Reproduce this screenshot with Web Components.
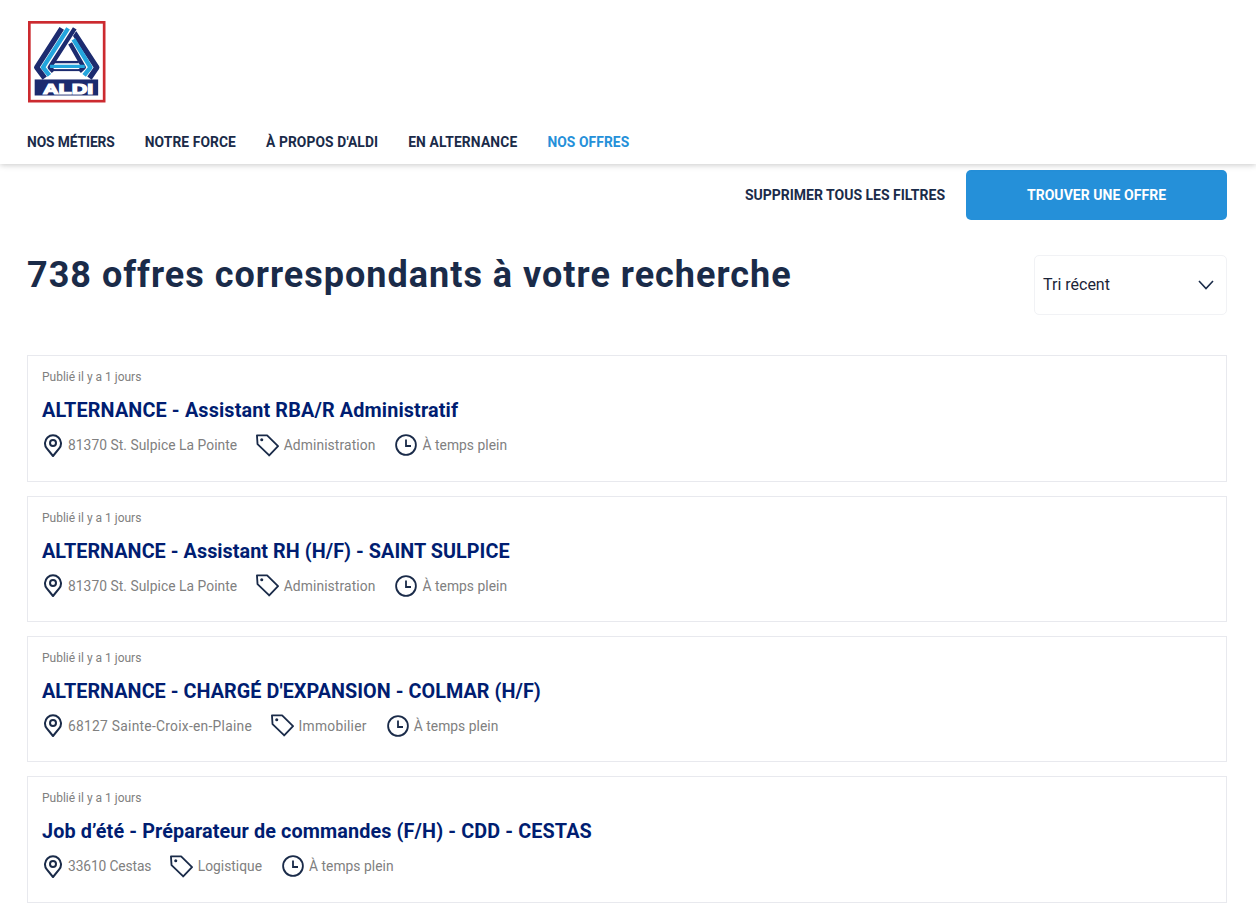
<!DOCTYPE html>
<html lang="fr"><head><meta charset="utf-8"><title>Offres ALDI</title>
<style>
html,body{margin:0;background:#fff;font-family:Roboto,"Liberation Sans",sans-serif;color:#1a2b49}
body{height:910px;overflow:hidden}
</style></head><body>
<aldi-header>
  <aldi-nav-link style="--ls:-.1px">NOS MÉTIERS</aldi-nav-link>
  <aldi-nav-link style="--ls:.1px">NOTRE FORCE</aldi-nav-link>
  <aldi-nav-link style="--ls:.12px">À PROPOS D'ALDI</aldi-nav-link>
  <aldi-nav-link style="--ls:.18px">EN ALTERNANCE</aldi-nav-link>
  <aldi-nav-link style="--ls:.1px" active>NOS OFFRES</aldi-nav-link>
</aldi-header>
<aldi-filter-bar></aldi-filter-bar>
<aldi-results-head count="738 offres correspondants à votre recherche"></aldi-results-head>
<aldi-job-list>
  <aldi-job-card style="--t:.15px;--p:.05px;--c:.12px" date="Publié il y a 1 jours" title="ALTERNANCE - Assistant RBA/R Administratif" place="81370 St. Sulpice La Pointe" cat="Administration" hours="À temps plein"></aldi-job-card>
  <aldi-job-card style="--t:.05px;--p:.05px;--c:.12px" date="Publié il y a 1 jours" title="ALTERNANCE - Assistant RH (H/F) - SAINT SULPICE" place="81370 St. Sulpice La Pointe" cat="Administration" hours="À temps plein"></aldi-job-card>
  <aldi-job-card style="--t:.05px;--p:.27px;--c:.25px" date="Publié il y a 1 jours" title="ALTERNANCE - CHARGÉ D'EXPANSION - COLMAR (H/F)" place="68127 Sainte-Croix-en-Plaine" cat="Immobilier" hours="À temps plein"></aldi-job-card>
  <aldi-job-card style="--t:.12px;--p:-.12px;--c:0px" date="Publié il y a 1 jours" title="Job d’été - Préparateur de commandes (F/H) - CDD - CESTAS" place="33610 Cestas" cat="Logistique" hours="À temps plein"></aldi-job-card>
</aldi-job-list>
<script>
const def=(n,html)=>customElements.define(n,class extends HTMLElement{
  connectedCallback(){ if(this.shadowRoot)return; const s=this.attachShadow({mode:'open'});
    s.innerHTML=typeof html==='function'?html(this):html; }
});
const LOGO=`<svg width="77.5" height="81.5" viewBox="40 33 232 244" aria-label="ALDI" style="display:block">
<rect x="44" y="37" width="224" height="236" fill="#fff" stroke="#cc2a2f" stroke-width="8"/>
<g fill="none" stroke-linejoin="round">
<path d="M178 68L246 172L224 204" stroke="#1c2b6f" stroke-width="16"/>
<path d="M176 88L227 172L208 196" stroke="#23a5dd" stroke-width="13"/>
<path d="M166 100L207 172L194 184" stroke="#1c2b6f" stroke-width="13"/>
<path d="M180 55L105 172L116 184" stroke="#fff" stroke-width="16"/>
<path d="M180 55L105 172L116 184" stroke="#1c2b6f" stroke-width="13"/>
<path d="M160 55L85 172L104 196" stroke="#23a5dd" stroke-width="13"/>
<path d="M141 55L66 172L90 204" stroke="#1c2b6f" stroke-width="16"/>
<path d="M118 156H192" stroke="#1c2b6f" stroke-width="7"/>
<path d="M106 169H210" stroke="#23a5dd" stroke-width="10"/>
<path d="M112 180H202" stroke="#1c2b6f" stroke-width="6"/>
</g>
<rect x="60" y="208" width="190" height="48" fill="#1c2b6f"/>
<text x="160" y="251" text-anchor="middle" font-family="Liberation Sans" font-weight="700" font-size="42" fill="#fff" stroke="#fff" stroke-width="3.5" textLength="150" lengthAdjust="spacingAndGlyphs">ALDI</text>
</svg>`;
def('aldi-logo',`<style>:host{display:block;width:78px;height:83px;margin-left:1px;line-height:0}</style>${LOGO}`);
def('aldi-header',`<style>
:host{display:block;height:164px;box-sizing:border-box;padding:21px 27px 0;background:#fff;box-shadow:0 1px 6px rgba(0,0,0,.22);position:relative}
nav{display:flex;gap:30px;margin-top:28px;height:20px;align-items:center}
</style><aldi-logo></aldi-logo><nav><slot></slot></nav>`);
def('aldi-nav-link',`<style>
:host{display:block;font:700 13.8px/20px Roboto,sans-serif;color:#1a2b49;white-space:nowrap;letter-spacing:var(--ls,0)}
:host([active]){color:#2590d9}
</style><slot></slot>`);
def('aldi-filter-bar',`<style>
:host{display:flex;justify-content:flex-end;align-items:center;gap:21px;padding:6px 29px 0 27px;font:700 14px/20px Roboto,sans-serif}
span{color:#1a2b49}
button{width:261px;height:50px;border:0;border-radius:5px;background:#2590d9;color:#fff;font:inherit;letter-spacing:.05px;padding:0}
</style><span>SUPPRIMER TOUS LES FILTRES</span><button>TROUVER UNE OFFRE</button>`);
def('aldi-results-head',h=>`<style>
:host{display:flex;justify-content:space-between;align-items:flex-start;padding:35px 29px 0 27px}
h1{margin:1px 0 0;font:700 36px/38px Roboto,sans-serif;color:#1a2b49;letter-spacing:1px}
div{box-sizing:border-box;width:193px;height:60px;border:1px solid #f1f2f5;border-radius:5px;display:flex;justify-content:space-between;align-items:center;padding:0 12px 0 8px;font:400 16px/20px Roboto,sans-serif;color:#1b2438}
</style><h1>${h.getAttribute('count')}</h1><div>Tri récent<svg width="16" height="10" viewBox="0 0 16 10" fill="none" stroke="#1a2b49" stroke-width="1.6"><path d="M1 1l7 7.5L15 1"/></svg></div>`);
def('aldi-job-list',`<style>:host{display:flex;flex-direction:column;gap:13.75px;margin:40.25px 29px 0 27px}</style><slot></slot>`);
const PIN=`<svg width="18" height="23" viewBox="0 0 18 23" fill="none" stroke="#1a2b49" stroke-width="2"><path d="M9 22L2.8 14.4A8 8 0 1 1 15.2 14.4Z" stroke-linejoin="round"/><circle cx="9" cy="9" r="3"/></svg>`;
const TAG=`<svg width="23" height="23" viewBox="0 0 24 24" fill="none" stroke="#1a2b49" stroke-width="1.9" stroke-linejoin="round"><path d="M1 1.4H11.6L23 12.6L13.8 22.4L1.6 10.6Z"/><circle cx="6" cy="6" r="1.6" fill="#1a2b49" stroke="none"/></svg>`;
const CLOCK=`<svg width="22" height="22" viewBox="0 0 22 22" fill="none" stroke="#1a2b49" stroke-width="1.8"><circle cx="11" cy="11" r="9.9"/><path d="M11 5.5V12H16"/></svg>`;
def('aldi-job-card',h=>{const a=n=>h.getAttribute(n);return `<style>
:host{display:block;box-sizing:border-box;height:126.5px;border:1px solid #e8e9ee;padding:13.05px 14px 0;background:#fff}
.d{font:400 12px/16px Roboto,sans-serif;color:#80807e}
h2{margin:14px 0 0;font:700 19.8px/24px Roboto,sans-serif;color:#001d71;letter-spacing:var(--t,0)}
.m{display:flex;margin-top:10px;padding-left:2px;height:24px;align-items:center;font:400 13.8px/20px Roboto,sans-serif;color:#808080;letter-spacing:.05px}
.i{display:flex;align-items:center;gap:5px;margin-right:20px}
.i:first-child{gap:6px;margin-right:18.5px}
.p{letter-spacing:var(--p)}.c{letter-spacing:var(--c)}
svg{display:block}
</style><div class="d">${a('date')}</div><h2>${a('title')}</h2>
<div class="m"><div class="i">${PIN}<span class="p">${a('place')}</span></div><div class="i">${TAG}<span class="c">${a('cat')}</span></div><div class="i">${CLOCK}<span>${a('hours')}</span></div></div>`});
</script>
</body></html>
